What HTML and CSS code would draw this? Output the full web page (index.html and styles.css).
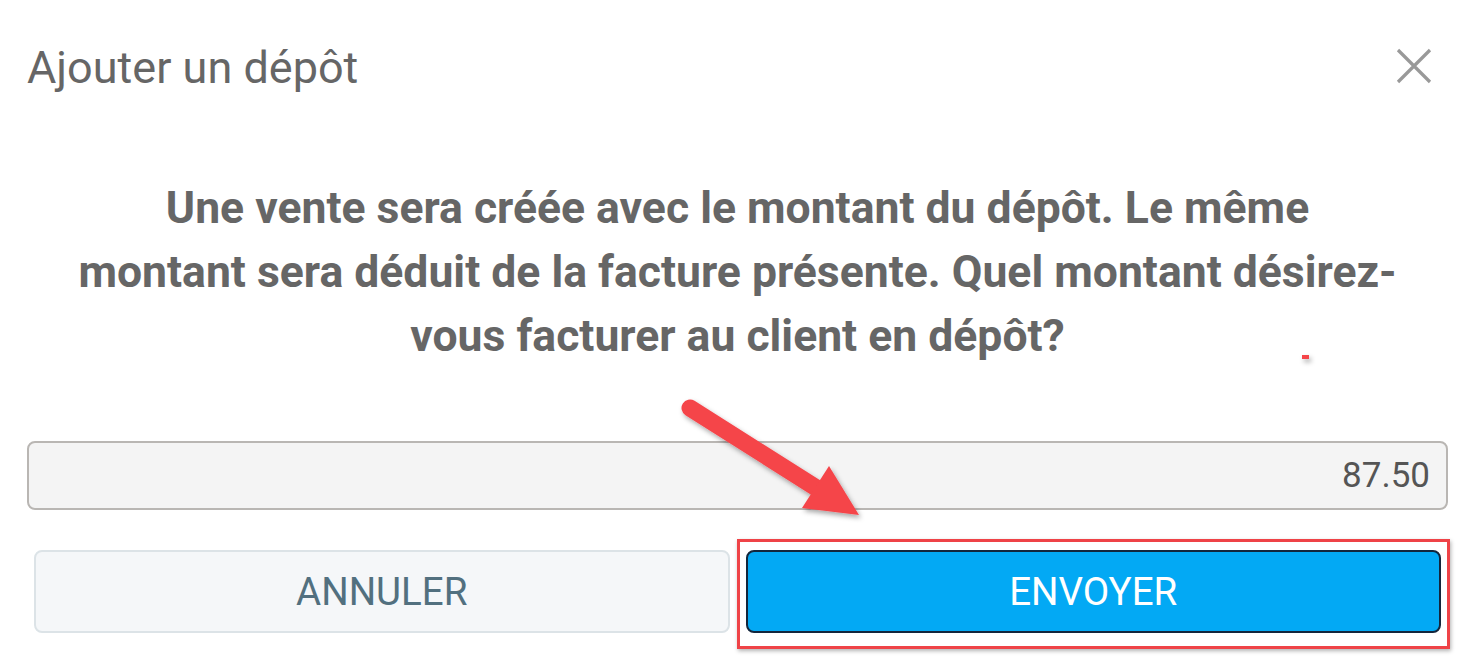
FILE: index.html
```html
<!DOCTYPE html>
<html lang="fr">

<head>
  <meta charset="UTF-8">
  <meta name="viewport" content="width=device-width, initial-scale=1.0">
  <title>Ajouter un dépôt</title>
  <link rel="stylesheet" href="styles.css">
</head>

<body>
  <div class="dialog">
    <div class="header">
      <h1 class="title">Ajouter un dépôt</h1>
      <button class="close" aria-label="Fermer">
        <svg width="36" height="36" viewBox="0 0 36 36">
          <path d="M2 2 L34 34 M34 2 L2 34" stroke="#999" stroke-width="3.2" fill="none" />
        </svg>
      </button>
    </div>

    <p class="message">
      Une vente sera créée avec le montant du dépôt. Le même<br>
      montant sera déduit de la facture présente. Quel montant désirez-<br>
      vous facturer au client en dépôt?
    </p>

    <input class="amount" type="text" value="87.50">

    <div class="actions">
      <button class="btn cancel">ANNULER</button>
      <button class="btn send">ENVOYER</button>
    </div>
  </div>

  <svg class="annotation" width="1475" height="662" viewBox="0 0 1475 662">
    <defs>
      <filter id="shadow" x="-20%" y="-20%" width="140%" height="140%">
        <feDropShadow dx="2" dy="3" stdDeviation="2.5" flood-color="#000" flood-opacity="0.35" />
      </filter>
    </defs>
    <g filter="url(#shadow)" fill="#f5444a" stroke="none">
      <line x1="690" y1="408" x2="818" y2="489" stroke="#f5444a" stroke-width="17" stroke-linecap="round" />
      <polygon points="802,508 829,466 859,515" />
      <rect x="1302" y="355" width="7" height="4" />
    </g>
  </svg>
</body>

</html>
```

FILE: styles.css
```css
body {
  margin: 0;
  background-color: #fff;
  font-family: Roboto, 'Noto Sans', sans-serif;
  position: relative;
  width: 1475px;
  height: 662px;
  overflow: hidden;
}

.dialog {
  padding: 0 27px;
}

.header {
  display: flex;
  align-items: center;
  justify-content: space-between;
  padding-top: 41px;
}

.title {
  margin: 0;
  font-size: 45px;
  font-weight: 400;
  color: #666;
  line-height: normal;
}

.close {
  border: none;
  background: none;
  padding: 0;
  margin-right: 16px;
  margin-top: -4px;
  width: 36px;
  height: 36px;
}

.message {
  margin: 82px 0 0;
  text-align: center;
  font-size: 44.5px;
  font-weight: 700;
  line-height: 64px;
  color: #666;
  white-space: nowrap;
}

.amount {
  display: block;
  box-sizing: border-box;
  width: 100%;
  height: 69px;
  margin-top: 73px;
  padding: 0 16px;
  border: 2px solid #b9b6b3;
  border-radius: 8px;
  background-color: #f4f4f4;
  text-align: right;
  font-family: Roboto, sans-serif;
  font-size: 35px;
  color: #555;
}

.actions {
  display: flex;
  gap: 16px;
  margin: 40px 7px 0;
}

.btn {
  flex: 1;
  height: 83px;
  border-radius: 8px;
  font-family: Roboto, sans-serif;
  font-size: 38.5px;
  font-weight: 400;
}

.cancel {
  background-color: #f5f7f9;
  border: 2px solid #dce3e7;
  color: #52707f;
}

.send {
  position: relative;
  background-color: #03a9f4;
  border: 2px solid #13263c;
  color: #fff;
}

/* red highlight box from the screenshot annotation */
.send::after {
  content: "";
  position: absolute;
  top: -13px;
  left: -11px;
  right: -11px;
  bottom: -18px;
  border: 3px solid #ef4347;
  box-shadow: 1px 2px 4px rgba(0, 0, 0, 0.3);
}

.annotation {
  position: absolute;
  top: 0;
  left: 0;
  pointer-events: none;
}
```
